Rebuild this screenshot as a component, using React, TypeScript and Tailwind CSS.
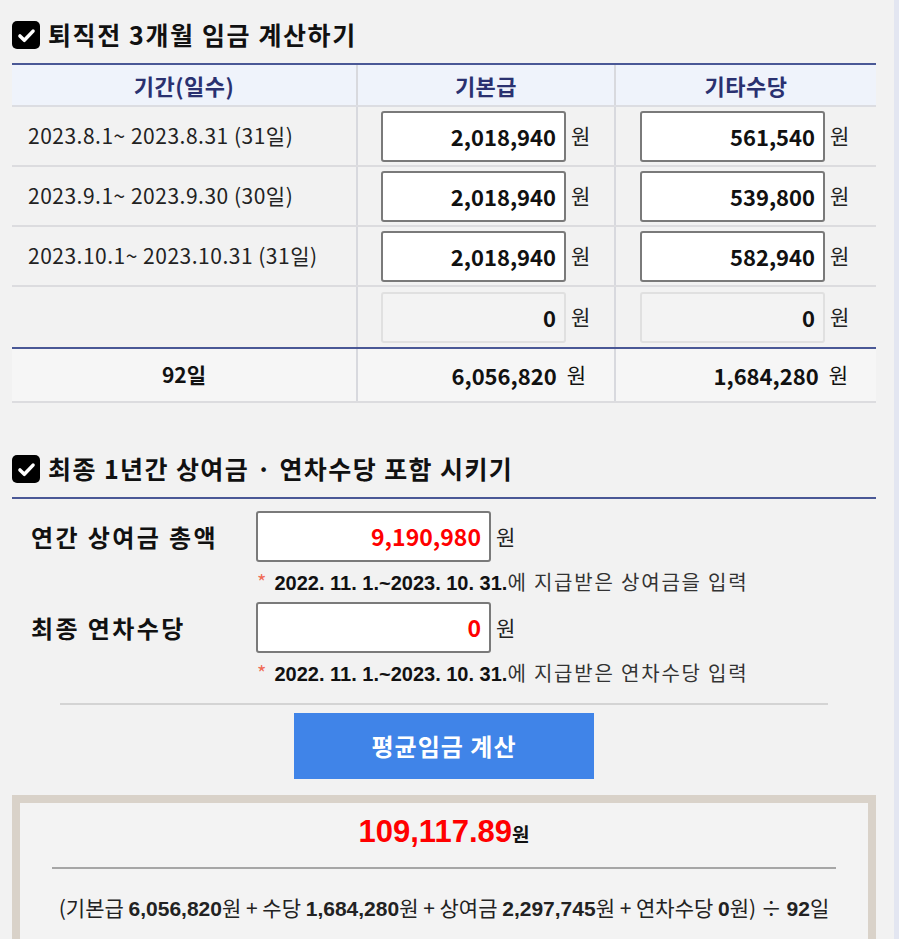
import React from "react";

const KR = "font-['Noto_Sans_CJK_KR',sans-serif]";
const AR = "font-['Liberation_Sans','Noto_Sans_CJK_KR',sans-serif]";

const ROWS = [
  { period: "2023.8.1~ 2023.8.31 (31일)", base: "2,018,940", extra: "561,540" },
  { period: "2023.9.1~ 2023.9.30 (30일)", base: "2,018,940", extra: "539,800" },
  { period: "2023.10.1~ 2023.10.31 (31일)", base: "2,018,940", extra: "582,940" },
];

function Check() {
  return (
    <span className="flex h-[28px] w-[28px] shrink-0 items-center justify-center rounded-[5px] bg-black">
      <svg viewBox="0 0 24 24" className="h-[21px] w-[21px]" fill="none" stroke="white" strokeWidth="4" strokeLinecap="round" strokeLinejoin="round">
        <path d="M4.5 12.5l5 5L19.5 7" />
      </svg>
    </span>
  );
}

function Field({ value, disabled }: { value: string; disabled?: boolean }) {
  return (
    <div className="flex items-center">
      <div
        className={
          "flex h-[51px] w-[185px] items-center justify-end rounded-[3px] border-2 pr-[8px] text-[22px] font-bold text-[#111] " +
          (disabled ? "border-[#e0e0e0] bg-[#f3f3f3]" : "border-[#7a7a7a] bg-white")
        }
      >
        {value}
      </div>
      <span className="ml-[5px] text-[21px] text-[#222]">원</span>
    </div>
  );
}

export default function App() {
  return (
    <div className={"flex h-[939px] w-[899px] overflow-hidden bg-[#f2f2f2] " + KR}>
      <div className="w-[894px] shrink-0 pl-[12px] pr-[18px] pt-[21px]">
        {/* 퇴직전 3개월 */}
        <div className="flex h-[28px] items-center gap-[8px]">
          <Check />
          <h2 className="text-[25px] font-bold tracking-[1.6px] text-[#111]">퇴직전 3개월 임금 계산하기</h2>
        </div>

        <div className="mt-[14px] border-t-2 border-[#4a5896]">
          <div className="flex h-[42px] border-b-2 border-[#dcdde2] bg-[#eff3fb] text-[22px] font-semibold tracking-[0.5px] text-[#2a3170]">
            <div className="flex w-[346px] items-center justify-center border-r-2 border-[#d8d9de]">기간(일수)</div>
            <div className="flex w-[258px] items-center justify-center border-r-2 border-[#d8d9de]">기본급</div>
            <div className="flex w-[260px] items-center justify-center">기타수당</div>
          </div>

          {ROWS.map((r) => (
            <div key={r.period} className="flex h-[60px] border-b-2 border-[#dcdcdf]">
              <div className="flex w-[346px] items-center whitespace-pre border-r-2 border-[#d8d9de] pl-[16px] text-[21px] tracking-[0.5px] text-[#222]">
                {r.period}
              </div>
              <div className="flex w-[258px] items-center border-r-2 border-[#d8d9de] pl-[23px]">
                <Field value={r.base} />
              </div>
              <div className="flex w-[260px] items-center pl-[24px]">
                <Field value={r.extra} />
              </div>
            </div>
          ))}

          <div className="flex h-[60px]">
            <div className="w-[346px] border-r-2 border-[#d8d9de]" />
            <div className="flex w-[258px] items-center border-r-2 border-[#d8d9de] pl-[23px]">
              <Field value="0" disabled />
            </div>
            <div className="flex w-[260px] items-center pl-[24px]">
              <Field value="0" disabled />
            </div>
          </div>

          <div className="flex h-[56px] border-y-2 border-b-[#dcdcdf] border-t-[#4a5896] bg-[#f6f6f6] text-[21px] text-[#111]">
            <div className="flex w-[346px] items-center justify-center border-r-2 border-[#d8d9de] font-bold">92일</div>
            <div className="flex w-[258px] items-center justify-end border-r-2 border-[#d8d9de] pr-[28px]">
              <b className="text-[22px]">6,056,820</b>
              <span className="ml-[10px]">원</span>
            </div>
            <div className="flex w-[260px] items-center justify-end pr-[28px]">
              <b className="text-[22px]">1,684,280</b>
              <span className="ml-[10px]">원</span>
            </div>
          </div>
        </div>

        {/* 상여금 · 연차수당 */}
        <div className="mt-[51px] flex h-[30px] items-center gap-[8px]">
          <Check />
          <h2 className="text-[25px] font-bold tracking-[1.4px] text-[#111]">최종 1년간 상여금 · 연차수당 포함 시키기</h2>
        </div>
        <div className="mt-[13px] h-[2px] bg-[#4a5896]" />

        <div className="mt-[12px] flex flex-col">
          {[
            { label: "연간 상여금 총액", value: "9,190,980", tail: "상여금을 입력" },
            { label: "최종 연차수당", value: "0", tail: "연차수당 입력" },
          ].map((f, i) => (
            <div key={f.label} className={i ? "mt-[7px]" : ""}>
              <div className="flex items-center">
                <div className="w-[244px] pl-[19px] text-[24px] font-bold tracking-[2.4px] text-[#111]">{f.label}</div>
                <div className="flex h-[51px] w-[235px] items-center justify-end rounded-[3px] border-2 border-[#7a7a7a] bg-white pr-[8px] text-[23px] font-bold text-[#ff0000]">
                  {f.value}
                </div>
                <span className="ml-[5px] text-[21px] text-[#222]">원</span>
              </div>
              <p className="mt-[8px] whitespace-nowrap pl-[245px] text-[20px] leading-[24px] tracking-[1.8px] text-[#333]">
                <span className="text-[#f06b55]">*</span>{" "}
                <b className={AR + " tracking-normal text-[#111]"}>2022. 11. 1.~2023. 10. 31.</b>에 지급받은 {f.tail}
              </p>
            </div>
          ))}
        </div>

        <div className="ml-[48px] mr-[48px] mt-[17px] h-[2px] bg-[#d4d4d4]" />

        <div className="mt-[8px] flex justify-center">
          <button className="h-[66px] w-[300px] bg-[#4084e8] text-[24px] font-bold tracking-[1px] text-white">평균임금 계산</button>
        </div>

        <div className="mt-[16px] border-[8px] border-[#d9d2c9] bg-[#f3f3f3] px-[32px] pt-[6px]">
          <div className="flex items-baseline justify-center">
            <span className={AR + " text-[31px] font-bold text-[#ff0000]"}>109,117.89</span>
            <span className="text-[19px] font-bold text-[#111]">원</span>
          </div>
          <div className="mt-[11px] h-[2px] bg-[#a6a6a6]" />
          <p className="mt-[23px] whitespace-nowrap text-center text-[21px] text-[#222]">
            (기본급 <b className={AR}>6,056,820</b>원 + 수당 <b className={AR}>1,684,280</b>원 + 상여금{" "}
            <b className={AR}>2,297,745</b>원 + 연차수당 <b className={AR}>0</b>원) ÷ <b className={AR}>92</b>일
          </p>
          <div className="h-[40px]" />
        </div>
      </div>
      <div className="w-[5px] shrink-0 bg-[#e3e6f1]" />
    </div>
  );
}
